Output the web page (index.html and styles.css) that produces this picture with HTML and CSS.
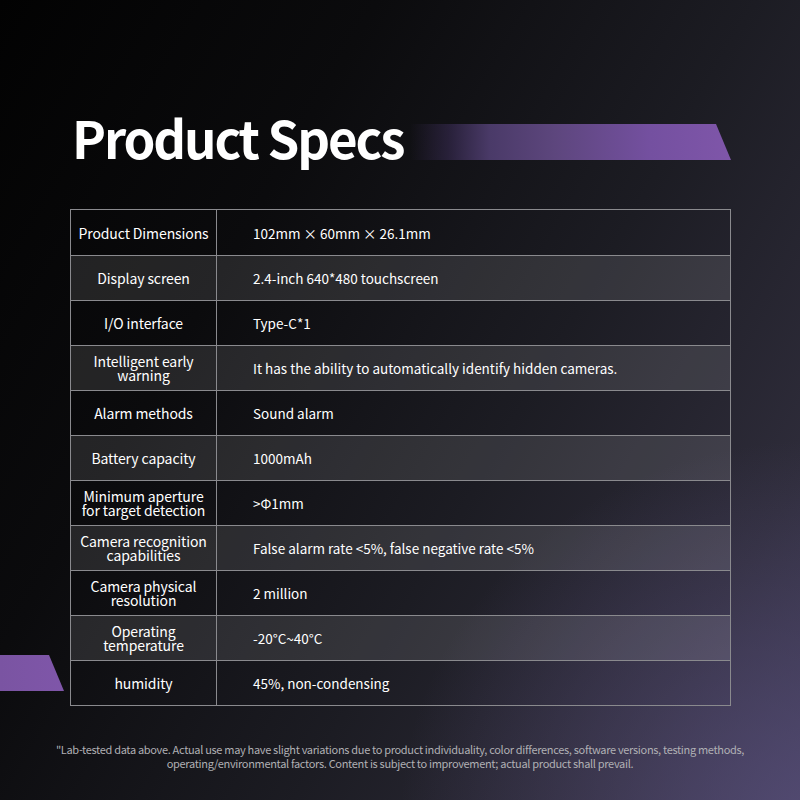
FILE: index.html
```html
<!DOCTYPE html>
<html>
<head>
<meta charset="utf-8">
<link rel="stylesheet" href="styles.css">
</head>
<body>
<div class="page">
  <div class="header">
    <h1 class="title">Product Specs</h1>
    <div class="bar-top"></div>
  </div>
  <div class="main">
    <div class="bar-left"></div>
    <div class="table">
      <div class="row"><div class="k">Product Dimensions</div><div class="v">102mm × 60mm × 26.1mm</div></div>
      <div class="row alt"><div class="k">Display screen</div><div class="v">2.4-inch 640*480 touchscreen</div></div>
      <div class="row"><div class="k">I/O interface</div><div class="v">Type-C*1</div></div>
      <div class="row alt"><div class="k">Intelligent early<br>warning</div><div class="v">It has the ability to automatically identify hidden cameras.</div></div>
      <div class="row"><div class="k">Alarm methods</div><div class="v">Sound alarm</div></div>
      <div class="row alt"><div class="k">Battery capacity</div><div class="v">1000mAh</div></div>
      <div class="row"><div class="k">Minimum aperture<br>for target detection</div><div class="v">&gt;Φ1mm</div></div>
      <div class="row alt"><div class="k">Camera recognition<br>capabilities</div><div class="v">False alarm rate &lt;5%, false negative rate &lt;5%</div></div>
      <div class="row"><div class="k">Camera physical<br>resolution</div><div class="v">2 million</div></div>
      <div class="row alt"><div class="k">Operating<br>temperature</div><div class="v">-20°C~40°C</div></div>
      <div class="row"><div class="k">humidity</div><div class="v">45%, non-condensing</div></div>
    </div>
  </div>
  <p class="note">"Lab-tested data above. Actual use may have slight variations due to product individuality, color differences, software versions, testing methods,<br>operating/environmental factors. Content is subject to improvement; actual product shall prevail.</p>
</div>
</body>
</html>
```
FILE: styles.css
```css
html, body {
  margin: 0;
  padding: 0;
}
body {
  width: 800px;
  height: 800px;
  overflow: hidden;
  font-family: "Noto Sans CJK SC", "Noto Sans", sans-serif;
  color: #fff;
}
.page {
  width: 800px;
  height: 800px;
  display: flex;
  flex-direction: column;
  background:
    radial-gradient(ellipse 420px 380px at 820px 820px, rgba(90, 80, 125, 0.75), rgba(90, 80, 125, 0) 100%),
    linear-gradient(120deg, #020202 0%, #0b0b0d 30%, #1c1c23 60%, #2e2c3a 85%, #3b3850 100%);
}
.header {
  display: flex;
  align-items: center;
  height: 88px;
  margin-top: 93px;
  padding-left: 72px;
}
.title {
  flex: none;
  width: 338px;
  margin: 0;
  font-size: 51px;
  font-weight: 700;
  letter-spacing: -2.1px;
  line-height: 1;
  white-space: nowrap;
}
.bar-top {
  flex: none;
  width: 321px;
  height: 36px;
  margin-top: 10px;
  background: linear-gradient(90deg, rgba(50,40,75,0) 0%, rgba(58,44,86,0.55) 12%, #4a3a68 25%, #5d467d 45%, #7450a0 75%, #7f56a9 100%);
  clip-path: polygon(0 0, 306px 0, 100% 100%, 0 100%);
}
.main {
  display: flex;
  margin-top: 28px;
}
.bar-left {
  flex: none;
  width: 64px;
  height: 36px;
  margin-top: 446px;
  margin-right: 6px;
  background: linear-gradient(90deg, #7a54a2, #7f56a9);
  clip-path: polygon(0 0, 49px 0, 100% 100%, 0 100%);
}
.table {
  width: 659px;
  border: 1px solid #8a8a8e;
  display: flex;
  flex-direction: column;
}
.row {
  display: flex;
  height: 44px;
  border-top: 1px solid #8a8a8e;
}
.row:first-child {
  border-top: none;
  height: 45px;
}
.row.alt {
  background: rgba(255, 255, 255, 0.11);
}
.k {
  flex: none;
  width: 145px;
  border-right: 1px solid #8a8a8e;
  display: flex;
  align-items: center;
  justify-content: center;
  text-align: center;
  font-size: 14px;
  line-height: 14px;
  letter-spacing: -0.1px;
}
.v {
  flex: 1;
  display: flex;
  align-items: center;
  padding-left: 36px;
  font-size: 13.5px;
  line-height: 14px;
}
.note {
  margin: 36px 0 0;
  text-align: center;
  font-size: 11px;
  line-height: 14px;
  color: #b0b0b4;
  letter-spacing: -0.32px;
}
```
